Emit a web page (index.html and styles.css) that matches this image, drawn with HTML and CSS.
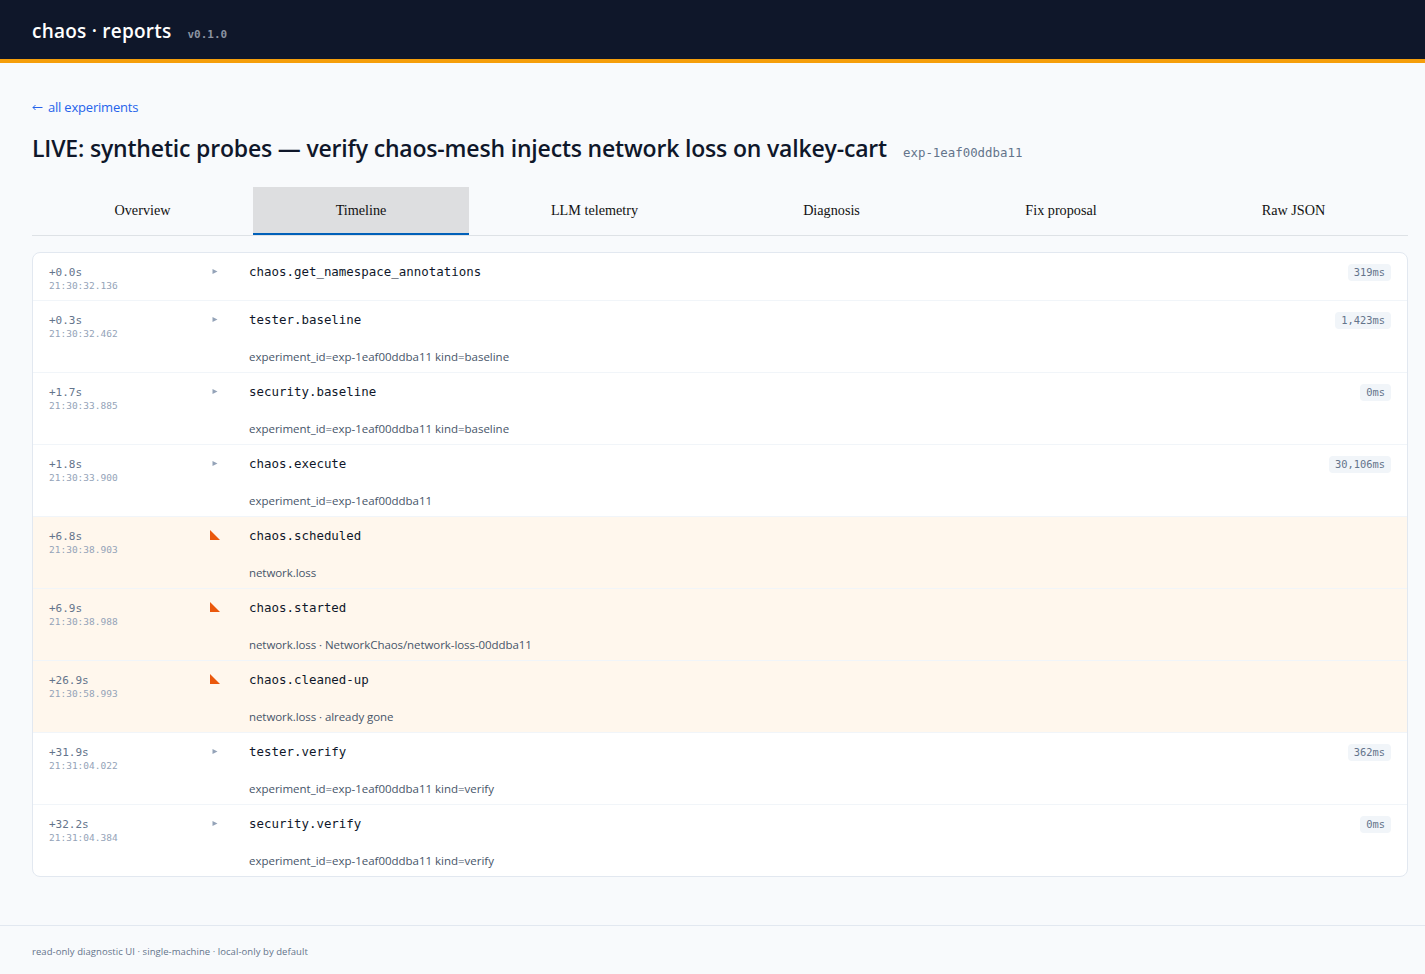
FILE: index.html
```html
<!DOCTYPE html>
<html lang="en">
<head>
<meta charset="utf-8">
<title>chaos · reports</title>
<link rel="stylesheet" href="styles.css">
</head>
<body>
<header class="topbar"><span class="brand">chaos · reports</span><span class="version mono">v0.1.0</span></header>
<main class="main">
<a class="back"><svg class="back-arrow" width="11" height="9" viewBox="0 0 11 9"><path d="M10.5 4.5H1M3.5 2L1 4.5L3.5 7" fill="none" stroke="currentColor"/></svg><span class="back-label">all experiments</span></a>
<h1 class="title"><span class="title-text">LIVE: synthetic probes — verify chaos-mesh injects network loss on valkey-cart</span><span class="exp mono">exp-1eaf00ddba11</span></h1>
<nav class="tabs"><span class="tab">Overview</span><span class="tab active">Timeline</span><span class="tab">LLM telemetry</span><span class="tab">Diagnosis</span><span class="tab">Fix proposal</span><span class="tab">Raw JSON</span></nav>
<section class="card">
<div class="row short"><div class="time mono"><span class="rel">+0.0s</span><span class="abs">21:30:32.136</span></div><svg class="mark" viewBox="0 0 10 10"><path d="M2.5 3L7.5 5.5L2.5 8Z"/></svg><div class="event"><span class="name mono">chaos.get_namespace_annotations</span></div><span class="badge mono">319ms</span></div>
<div class="row"><div class="time mono"><span class="rel">+0.3s</span><span class="abs">21:30:32.462</span></div><svg class="mark" viewBox="0 0 10 10"><path d="M2.5 3L7.5 5.5L2.5 8Z"/></svg><div class="event"><span class="name mono">tester.baseline</span><span class="detail">experiment_id=exp-1eaf00ddba11 kind=baseline</span></div><span class="badge mono">1,423ms</span></div>
<div class="row"><div class="time mono"><span class="rel">+1.7s</span><span class="abs">21:30:33.885</span></div><svg class="mark" viewBox="0 0 10 10"><path d="M2.5 3L7.5 5.5L2.5 8Z"/></svg><div class="event"><span class="name mono">security.baseline</span><span class="detail">experiment_id=exp-1eaf00ddba11 kind=baseline</span></div><span class="badge mono">0ms</span></div>
<div class="row"><div class="time mono"><span class="rel">+1.8s</span><span class="abs">21:30:33.900</span></div><svg class="mark" viewBox="0 0 10 10"><path d="M2.5 3L7.5 5.5L2.5 8Z"/></svg><div class="event"><span class="name mono">chaos.execute</span><span class="detail">experiment_id=exp-1eaf00ddba11</span></div><span class="badge mono">30,106ms</span></div>
<div class="row chaos"><div class="time mono"><span class="rel">+6.8s</span><span class="abs">21:30:38.903</span></div><svg class="mark" viewBox="0 0 10 10"><path d="M0 0L10 10H0Z"/></svg><div class="event"><span class="name mono">chaos.scheduled</span><span class="detail tight">network.loss</span></div></div>
<div class="row chaos"><div class="time mono"><span class="rel">+6.9s</span><span class="abs">21:30:38.988</span></div><svg class="mark" viewBox="0 0 10 10"><path d="M0 0L10 10H0Z"/></svg><div class="event"><span class="name mono">chaos.started</span><span class="detail tight">network.loss · NetworkChaos/network-loss-00ddba11</span></div></div>
<div class="row chaos"><div class="time mono"><span class="rel">+26.9s</span><span class="abs">21:30:58.993</span></div><svg class="mark" viewBox="0 0 10 10"><path d="M0 0L10 10H0Z"/></svg><div class="event"><span class="name mono">chaos.cleaned-up</span><span class="detail tight">network.loss · already gone</span></div></div>
<div class="row"><div class="time mono"><span class="rel">+31.9s</span><span class="abs">21:31:04.022</span></div><svg class="mark" viewBox="0 0 10 10"><path d="M2.5 3L7.5 5.5L2.5 8Z"/></svg><div class="event"><span class="name mono">tester.verify</span><span class="detail">experiment_id=exp-1eaf00ddba11 kind=verify</span></div><span class="badge mono">362ms</span></div>
<div class="row"><div class="time mono"><span class="rel">+32.2s</span><span class="abs">21:31:04.384</span></div><svg class="mark" viewBox="0 0 10 10"><path d="M2.5 3L7.5 5.5L2.5 8Z"/></svg><div class="event"><span class="name mono">security.verify</span><span class="detail">experiment_id=exp-1eaf00ddba11 kind=verify</span></div><span class="badge mono">0ms</span></div>
</section>
</main>
<footer class="footer"><span class="foot-text">read-only diagnostic UI · single-machine · local-only by default</span></footer>
</body>
</html>
```
FILE: styles.css
```css
* { box-sizing: border-box; }
body { margin: 0; height: 974px; overflow: hidden; background: #f8fafc; color: #0f172a; font-family: "Open Sans", "Noto Sans", sans-serif; display: flex; flex-direction: column; white-space: nowrap; }
.mono { font-family: "DejaVu Sans Mono", "Liberation Mono", monospace; }
.topbar { height: 63px; flex: none; background: #0f172a; border-bottom: 4px solid #f59e0b; padding: 17px 32px 0; display: flex; align-items: baseline; gap: 16px; }
.brand { color: #fff; font-size: 19px; line-height: 28px; font-weight: 600; letter-spacing: 0.23px; }
.version { color: #8b93a1; font-size: 11px; line-height: 16px; font-weight: 700; }
.main { flex: none; height: 862px; padding: 34px 17px 0 32px; }
.back { display: flex; align-items: center; gap: 5px; height: 20px; color: #2563eb; }
.back-label { font-size: 13px; line-height: 20px; letter-spacing: -0.2px; }
.title { margin: 14px 0 0; height: 36px; display: flex; align-items: baseline; gap: 16px; font-weight: 600; }
.title-text { font-size: 23px; line-height: 34px; letter-spacing: -0.18px; }
.exp { font-size: 12.4px; font-weight: 400; color: #64748b; }
.tabs { margin-top: 20px; height: 49px; border-bottom: 1px solid #dee2e6; display: grid; grid-template-columns: 221px 216px 251px 223px 236px 229px; font-family: "Liberation Serif", serif; font-size: 14.2px; color: #111; }
.tab { text-align: center; line-height: 46px; height: 48px; border-bottom: 2px solid transparent; }
.tab.active { background: #dddee0; border-color: #0060b9; }
.card { margin-top: 16px; border: 1px solid #e2e8f0; border-radius: 8px; background: #fff; overflow: hidden; }
.row { height: 72px; border-bottom: 1px solid #f1f5f9; padding: 8px 16px 0; display: grid; grid-template-columns: 160px 40px 1fr auto; align-items: start; }
.row.short { height: 48px; }
.row:last-child { height: 71px; border-bottom: 0; }
.row.chaos { background: #fff7ed; }
.time { display: flex; flex-direction: column; padding-top: 4px; }
.rel { font-size: 11px; line-height: 16px; color: #64748b; }
.abs { margin-top: -1px; font-size: 9.5px; line-height: 12px; color: #94a3b8; }
.mark { width: 10px; height: 10px; margin: 5px 0 0 1px; fill: #94a3b8; }
.chaos .mark { fill: #ea580c; }
.event { display: flex; flex-direction: column; padding-top: 1px; }
.name { font-size: 12.45px; line-height: 20px; }
.detail { margin-top: 18px; font-size: 11.5px; line-height: 18px; letter-spacing: -0.02px; color: #475569; }
.detail.tight { letter-spacing: -0.07px; }
.badge { margin-top: 3px; height: 17px; border-radius: 4px; padding: 0 6px; background: #f1f5f9; color: #64748b; font-size: 10.4px; line-height: 17px; }
.footer { flex: 1; border-top: 1px solid #e2e8f0; padding: 17px 32px; }
.foot-text { display: block; font-size: 9.5px; line-height: 18px; letter-spacing: 0.06px; color: #64748b; }
```
